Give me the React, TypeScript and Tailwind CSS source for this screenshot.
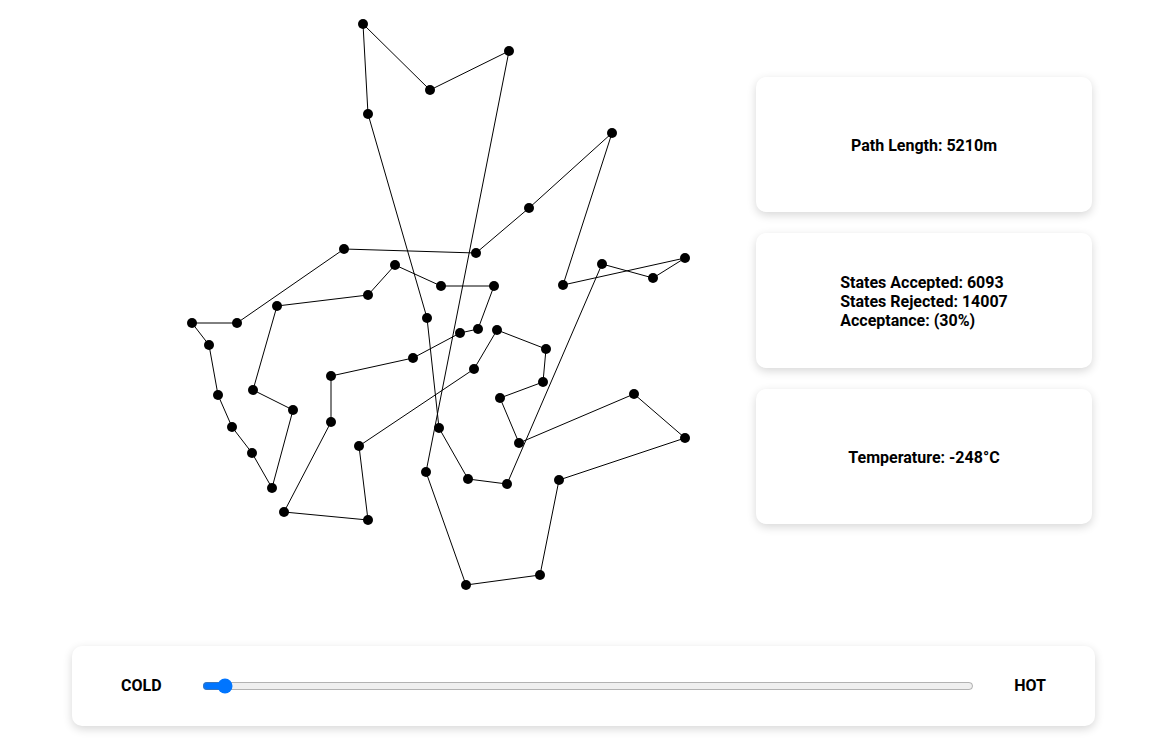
import { useState } from "react";

// tour order, closed loop
const TOUR: [number, number][] = [
  [363, 24], [430, 90], [509, 51], [426, 472], [466, 585], [540, 575],
  [559, 480], [685, 438], [634, 394], [519, 443], [500, 398], [543, 382],
  [546, 349], [497, 330], [474, 369], [359, 446], [368, 520], [284, 512],
  [331, 422], [331, 376], [413, 358], [460, 333], [478, 329], [494, 286],
  [441, 286], [395, 265], [368, 295], [277, 306], [253, 390], [293, 410],
  [272, 488], [252, 453], [232, 427], [218, 395], [209, 345], [192, 323],
  [237, 323], [344, 249], [476, 253], [529, 208], [612, 133], [563, 285],
  [685, 258], [653, 278], [602, 264], [507, 484], [468, 479], [439, 428],
  [427, 318], [368, 114],
];

function TourMap() {
  const pts = TOUR.map(([x, y]) => `${x},${y}`).join(" ");
  return (
    <svg width={756} height={600} className="shrink-0">
      <polygon points={pts} fill="none" stroke="#000" strokeWidth={1} />
      {TOUR.map(([x, y], i) => (
        <circle key={i} cx={x} cy={y} r={5} fill="#000" />
      ))}
    </svg>
  );
}

function StatCard({ children }: { children: React.ReactNode }) {
  return (
    <div className="flex h-[135px] w-[336px] items-center justify-center rounded-[10px] bg-white shadow-[0_3px_10px_rgba(0,0,0,0.16)]">
      {children}
    </div>
  );
}

export default function App() {
  const [temp, setTemp] = useState(2);

  return (
    <div className="min-h-screen bg-white font-['Roboto',sans-serif] text-[16px] font-bold text-black">
      <div className="flex h-[600px] items-center">
        <TourMap />
        <div className="flex flex-col gap-[21px]">
          <StatCard>
            <p className="pt-1">Path Length: 5210m</p>
          </StatCard>
          <StatCard>
            <div className="pt-[2px] leading-[19px]">
              <p>States Accepted: 6093</p>
              <p>States Rejected: 14007</p>
              <p>Acceptance: (30%)</p>
            </div>
          </StatCard>
          <StatCard>
            <p className="pt-1">Temperature: -248°C</p>
          </StatCard>
        </div>
      </div>

      <div className="mx-auto mt-[46px] flex h-[80px] w-[1023px] items-center gap-10 rounded-[10px] bg-white px-[49px] shadow-[0_3px_10px_rgba(0,0,0,0.16)]">
        <span>COLD</span>
        <input
          type="range"
          min={0}
          max={100}
          value={temp}
          onChange={(e) => setTemp(Number(e.target.value))}
          className="flex-1 accent-[#0075ff]"
        />
        <span>HOT</span>
      </div>
    </div>
  );
}
